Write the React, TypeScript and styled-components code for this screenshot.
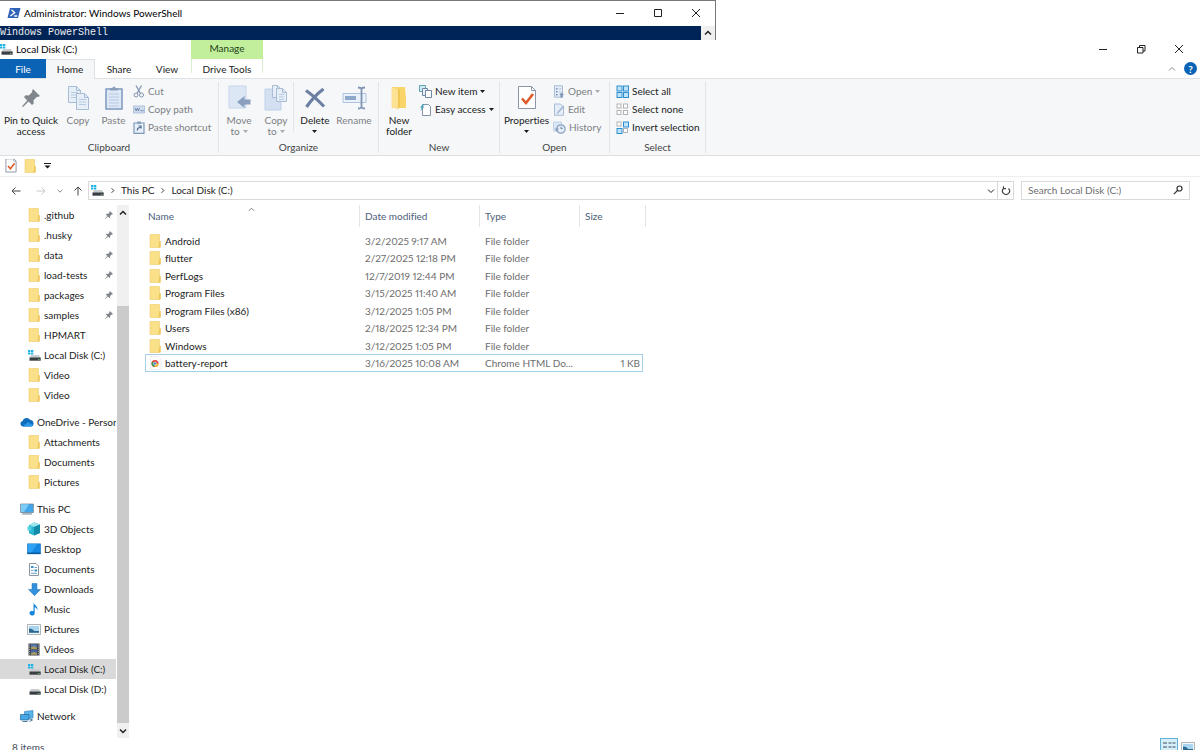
import React from "react";
import styled, { createGlobalStyle, css } from "styled-components";

const GlobalStyle = createGlobalStyle`
  *, *::before, *::after { box-sizing: border-box; }
  html, body { margin: 0; background: #fff; }
  body, button, input {
    font-family: Lato, "Noto Sans", sans-serif;
    font-size: 10px;
    line-height: 12px;
    font-variant-ligatures: none;
    font-variant-numeric: proportional-nums;
    color: #1b1b1b;
  }
  button { border: 0; padding: 0; margin: 0; background: none; cursor: default; }
  svg { display: block; flex: none; }
`;

/* ---------- layout ---------- */

const Screen = styled.div`
  display: flex;
  flex-direction: column;
  height: 100vh;
  overflow: hidden;
  white-space: nowrap;
`;

const ShellWindow = styled.section`
  flex: none;
  width: 716px;
  max-width: 100%;
  border-top: 1px solid #777;
  border-right: 1px solid #777;
`;

const ShellTitle = styled.header`
  display: flex;
  align-items: center;
  height: 25px;
  padding: 0 0 1px 7px;
  gap: 3px;
  color: #000;
`;

const Console = styled.div`
  display: flex;
  height: 14px;
  background: #012456;
`;

const ConsoleText = styled.pre`
  flex: 1;
  margin: 0;
  font-family: "Liberation Mono", monospace;
  font-size: 10px;
  line-height: 14px;
  color: #eee;
`;

const ConsoleScroll = styled.button`
  display: grid;
  place-items: center;
  width: 14px;
  background: #f0f0f0;
`;

const CaptionButtons = styled.div`
  display: flex;
  margin-left: auto;
`;

const CaptionButton = styled.button`
  display: grid;
  place-items: center;
  width: 38px;
  height: 18px;
`;

const Explorer = styled.section`
  display: flex;
  flex-direction: column;
  flex: 1 0 auto;
`;

const TitleBar = styled.header`
  display: flex;
  align-items: center;
  height: 19px;
  padding: 0 2px 1px 0;
`;

const TitleName = styled.div`
  display: flex;
  align-items: center;
  gap: 3px;
  width: 191px;
  color: #000;
`;

const ContextLabel = styled.div`
  width: 72px;
  height: 19px;
  align-self: flex-start;
  background: #c1ef9c;
  text-align: center;
  line-height: 17px;
  color: #23411a;
`;

const TabRow = styled.nav`
  display: flex;
  height: 20px;
  border-bottom: 1px solid #dfe2e5;
`;

const Tab = styled.button<{ $kind?: "file" | "active" | "context"; $w: number }>`
  width: ${(p) => p.$w}px;
  height: 20px;
  ${(p) => p.$kind === "file" && css`background: #0a63b5; color: #fff; height: 19px;`}
  ${(p) => p.$kind === "active" && css`
    background: #f5f6f7;
    border: solid #dfe2e5;
    border-width: 1px 1px 0 0;
    padding-bottom: 1px;
  `}
  ${(p) => p.$kind === "context" && css`
    border: solid #dcefd0;
    border-width: 0 1px;
    height: 14px;
    line-height: 20px;
  `}
`;

const TabTools = styled.div`
  display: flex;
  align-items: center;
  gap: 7px;
  margin-left: auto;
  padding-right: 3px;
`;

const HelpButton = styled.button`
  width: 13px;
  height: 13px;
  border-radius: 50%;
  background: #0a63b5;
  color: #fff;
  font-weight: 700;
`;

const Ribbon = styled.div`
  display: flex;
  height: 77px;
  padding-top: 3px;
  background: #f5f7f9;
  border-bottom: 1px solid #dcdee0;
`;

const Group = styled.section<{ $w: number }>`
  display: flex;
  flex-direction: column;
  justify-content: space-between;
  flex: none;
  width: ${(p) => p.$w}px;
  height: 71px;
  border-right: 1px solid #e2e4e6;
`;

const GroupItems = styled.div`
  display: flex;
  height: 56px;
`;

const GroupLabel = styled.h2`
  margin: 0;
  font-size: 10px;
  font-weight: 400;
  text-align: center;
  color: #444;
`;

const BigButton = styled.button<{ $w: number }>`
  display: flex;
  flex-direction: column;
  align-items: center;
  width: ${(p) => p.$w}px;
  line-height: 11px;
  gap: 2px;
  color: ${(p) => (p.disabled ? "#7d7f83" : "#1b1b1b")};
`;

const BigIcon = styled.span`
  display: grid;
  place-items: center;
  flex: none;
  height: 31px;
`;

const SmallColumn = styled.div`
  display: flex;
  flex-direction: column;
`;

const SmallButton = styled.button`
  display: flex;
  align-items: center;
  gap: 3px;
  height: 18px;
  color: ${(p) => (p.disabled ? "#7d7f83" : "#1b1b1b")};
`;

const Divider = styled.span`
  width: 1px;
  height: 50px;
  background: #e2e4e6;
`;

const QuickAccess = styled.div`
  display: flex;
  align-items: center;
  gap: 7px;
  height: 21px;
  padding-left: 5px;
  border-bottom: 1px solid #efefef;
`;

const AddressRow = styled.div`
  display: flex;
  align-items: center;
  height: 27px;
  padding-right: 10px;
`;

const NavButton = styled.button<{ $w: number }>`
  display: grid;
  place-items: center;
  width: ${(p) => p.$w}px;
  height: 18px;
`;

const AddressBox = styled.div`
  display: flex;
  align-items: center;
  flex: 1;
  height: 19px;
  margin-left: 2px;
  padding-left: 2px;
  border: 1px solid #d9d9d9;
`;

const Crumb = styled.button`
  height: 17px;
  padding-bottom: 1px;
`;

const AddressEnd = styled.div`
  display: flex;
  margin-left: auto;
`;

const AddressButton = styled.button<{ $w: number; $split?: boolean }>`
  display: grid;
  place-items: center;
  width: ${(p) => p.$w}px;
  height: 17px;
  border-left: ${(p) => (p.$split ? "1px solid #d9d9d9" : "0")};
`;

const SearchBox = styled.label`
  display: flex;
  align-items: center;
  width: 169px;
  height: 19px;
  margin-left: 7px;
  padding: 0 6px 1px;
  border: 1px solid #d9d9d9;
`;

const SearchInput = styled.input`
  flex: 1;
  min-width: 0;
  padding: 0;
  border: 0;
  outline: 0;
  &::placeholder { color: #6d6d6d; opacity: 1; }
`;

const Body = styled.div`
  display: flex;
  flex: 1 0 auto;
  padding-top: 1px;
`;

const Tree = styled.nav`
  display: flex;
  flex-direction: column;
  gap: 7px;
  width: 116px;
  padding-bottom: 12px;
`;

const TreeList = styled.ul`
  margin: 0;
  padding: 0;
  list-style: none;
`;

const TreeLink = styled.a<{ $root?: boolean; $selected?: boolean }>`
  display: flex;
  align-items: center;
  gap: 3px;
  height: 20px;
  padding-left: ${(p) => (p.$root ? 20 : 27)}px;
  background: ${(p) => (p.$selected ? "#d9d9d9" : "transparent")};
  color: #1b1b1b;
  text-decoration: none;
  overflow: hidden;
`;

const IconSlot = styled.span`
  display: grid;
  place-items: center;
  flex: none;
  width: 14px;
`;

const PinSlot = styled.span`
  margin-left: auto;
  padding-right: 3px;
`;

const Scrollbar = styled.div`
  display: flex;
  flex-direction: column;
  width: 12px;
  margin-left: 1px;
  background: #f0f0f0;
`;

const ScrollButton = styled.button`
  display: grid;
  place-items: center;
  height: 15px;
`;

const ScrollTrack = styled.div`
  display: flex;
  flex-direction: column;
  justify-content: flex-end;
  flex: 1;
`;

const ScrollThumb = styled.div`
  height: 83%;
  background: #cbcbcb;
`;

const Files = styled.main`
  flex: 1;
  padding-left: 16px;
`;

const FileTable = styled.table`
  width: 501px;
  table-layout: fixed;
  border-collapse: separate;
  border-spacing: 0;
`;

const HeadCell = styled.th`
  position: relative;
  height: 27px;
  padding: 0;
  vertical-align: top;
  font-weight: 400;
  text-align: left;
`;

const HeadLabel = styled.button<{ $first?: boolean }>`
  display: block;
  width: 100%;
  height: 22px;
  padding-left: ${(p) => (p.$first ? 3 : 5)}px;
  border-right: 1px solid #e3e3e3;
  text-align: left;
  color: #4c607a;
`;

const SortMark = styled.span`
  position: absolute;
  top: 0;
  left: 102px;
`;

const FileRow = styled.tr<{ $focused?: boolean }>`
  height: 17px;
  &:nth-child(even) { height: 18px; }
  td {
    padding: 0 0 0 5px;
    color: #6d6d6d;
    ${(p) => p.$focused && css`
      border: solid #a6d0e8;
      border-width: 1px 0;
    `}
  }
  td:first-child { color: #1b1b1b; padding-left: 4px; }
  td:nth-child(4) { text-align: right; padding-right: 3px; }
  ${(p) => p.$focused && css`
    td:first-child { border-left-width: 1px; padding-left: 3px; }
    td:nth-child(4) { border-right-width: 1px; padding-right: 2px; }
    td:last-child { border: 0; }
  `}
`;

const FileName = styled.span`
  display: flex;
  align-items: center;
  gap: 3px;
  svg { width: 13px; }
`;

const StatusBar = styled.footer`
  display: flex;
  justify-content: space-between;
  height: 19px;
  padding: 0 6px 0 12px;
  line-height: 18px;
  color: #3f4a57;
`;

const ViewButtons = styled.div`
  display: flex;
  gap: 3px;
`;

const ViewButton = styled.button<{ $on?: boolean }>`
  display: grid;
  place-items: center;
  width: ${(p) => (p.$on ? 18 : 13)}px;
  height: 18px;
  border: ${(p) => (p.$on ? "1px solid #5fb2d6" : "0")};
  background: ${(p) => (p.$on ? "#d5eef8" : "none")};
`;

const Spacer = styled.span`
  width: 6px;
`;

/* ---------- icons ---------- */

const FolderIcon = () => (
  <svg width="13" height="14" viewBox="0 0 13 14">
    <path d="M1 .5h9.500v13H1z" fill="#fbe08a" stroke="#eecb66" strokeWidth=".6" />
    <path d="M10.200 7.600l1.600-.6v6.500H9.400z" fill="#eec75c" />
  </svg>
);

const BigFolderIcon = () => (
  <svg width="18" height="24" viewBox="0 0 18 24">
    <path d="M2 1h13l1 12v9H2z" fill="#f9d469" />
    <path d="M1.500 1l6.500 2.500v20L1.500 21z" fill="#fde293" />
    <path d="M8 3.500V23l1.800-1.500V3z" fill="#f3c653" />
  </svg>
);

const DriveIcon = ({ windows = true }: { windows?: boolean }) => (
  <svg width="13" height="13" viewBox="0 0 13 13">
    {windows && <path d="M0 1h2.300v2H0zM2.900 1h2.400v2H2.900zM0 3.600h2.300v2H0zM2.900 3.600h2.400v2H2.900z" fill="#1fb3e6" />}
    <path d="M3 6h8l1.500 3H1.500z" fill="#c9cccf" />
    <path d="M1.500 8.500h11.200v3.200H1.500z" fill="#3a3f44" />
    <path d="M10 10h1.500v.8H10z" fill="#7cd67c" />
  </svg>
);

const PowerShellIcon = () => (
  <svg width="14" height="12" viewBox="0 0 14 12">
    <path d="M3 1h10.500L11 11H.5z" fill="#2e63b8" />
    <path d="M4.500 2.800l3.200 3-4.400 3.200M7.200 9h3" stroke="#fff" strokeWidth="1.300" fill="none" />
  </svg>
);

type GlyphProps = { d: string; size?: number; color?: string; width?: number };
const Glyph = ({ d, size = 10, color = "#222", width = 1 }: GlyphProps) => (
  <svg width={size} height={size} viewBox="0 0 10 10" fill="none" stroke={color} strokeWidth={width}>
    <path d={d} />
  </svg>
);

const MINIMIZE = "M1 5.500h8";
const MAXIMIZE = "M1.500 1.500h7v7h-7z";
const RESTORE = "M1.500 3.500h5.500v5.500H1.500zM3.500 3.500V1.500H9v5.500H7";
const CLOSE = "M1 1l8 8M9 1L1 9";
const UP = "M2 6.500L5 3.500l3 3";
const DOWN = "M2 3.500l3 3 3-3";
const RIGHT = "M4 2.500L6.500 5 4 7.500";

const Caret = ({ faded = false }: { faded?: boolean }) => (
  <svg width="5" height="3" viewBox="0 0 5 3">
    <path d="M0 0h5L2.500 3z" fill={faded ? "#a9abaf" : "#1b1b1b"} />
  </svg>
);

const PinIcon = ({ size = 8 }: { size?: number }) => (
  <svg width={size} height={size} viewBox="0 0 18 18">
    <path d="M11 0l7 7-2 1-1-.3-3.500 3.500.2 3.300-1.700 1.500-3.400-3.400L1 18l-1-.8 5.200-5.800L2 8l1.500-1.700 3.300.2L10.300 3 10 2z" fill="#80868c" />
  </svg>
);

const Page = ({ x, y, w, h, lines = true }: { x: number; y: number; w: number; h: number; lines?: boolean }) => (
  <g fill="#e6eef8" stroke="#a9bcd6" strokeWidth="1">
    <path d={`M${x} ${y}h${w - 4}l4 4v${h - 4}h-${w}z`} />
    <path d={`M${x + w - 4} ${y}v4h4`} fill="none" />
    {lines && <path d={`M${x + 2.5} ${y + 6}h${w - 5}M${x + 2.5} ${y + 8.500}h${w - 5}M${x + 2.5} ${y + 11}h${w - 5}`} stroke="#b9cbe2" />}
  </g>
);

const CopyIcon = () => (
  <svg width="22" height="24" viewBox="0 0 22 24">
    <Page x={1.5} y={0.5} w={12} h={16} />
    <Page x={9.5} y={7.5} w={12} h={16} />
  </svg>
);

const PasteIcon = () => (
  <svg width="18" height="25" viewBox="0 0 18 25">
    <path d="M1 4h16v20H1z" fill="#dfe9f6" stroke="#7f98bd" strokeWidth="1.500" />
    <path d="M5 5.500V3h2.500a1.500 1.500 0 013 0H13v2.500z" fill="#8b9fbd" />
    <path d="M4 9h10M4 12h10M4 15h10M4 18h10M4 21h10" stroke="#b4c8e3" />
  </svg>
);

const CutIcon = () => (
  <svg width="12" height="13" viewBox="0 0 12 13" fill="none" stroke="#8496b0">
    <path d="M3 .5l4.500 8M8.500 .5L4 8.500" strokeWidth="1.300" />
    <circle cx="3" cy="10" r="2" />
    <circle cx="8.500" cy="10" r="2" />
  </svg>
);

const CopyPathIcon = () => (
  <svg width="12" height="9" viewBox="0 0 12 9">
    <path d="M.5 1h11v7H.5z" fill="#cfddef" stroke="#a5b9d3" strokeWidth=".8" />
    <path d="M2 3l1.200 3 1.200-3 1 3L6.500 3M7.500 5.700h3" stroke="#6a84aa" strokeWidth=".9" fill="none" />
  </svg>
);

const PasteShortcutIcon = () => (
  <svg width="12" height="13" viewBox="0 0 12 13">
    <path d="M1 2h10v10.300H1z" fill="#e8f0fa" stroke="#7f98bd" strokeWidth="1.200" />
    <path d="M4 .5h4v2.500H4z" fill="#8b9fbd" />
    <path d="M4.300 9.500c0-2 1-3 3-3M5.600 5h2.400v2.600" stroke="#47668f" strokeWidth="1.200" fill="none" />
  </svg>
);

const MoveToIcon = () => (
  <svg width="24" height="25" viewBox="0 0 24 25">
    <path d="M2 1h17v22H2z" fill="#dce7f5" stroke="#c5d5ea" />
    <path d="M23.500 14.500h-6V11L10 17l7.500 6v-3.500h6z" fill="#8ba0be" />
  </svg>
);

const CopyToIcon = () => (
  <svg width="24" height="26" viewBox="0 0 24 26">
    <path d="M1 4h16v21H1z" fill="#d3e0f1" stroke="#c0d1e8" />
    <Page x={8.5} y={0.5} w={9} h={12} lines={false} />
    <Page x={12.5} y={3.5} w={10} h={13} />
  </svg>
);

const DeleteIcon = () => (
  <svg width="22" height="22" viewBox="0 0 22 22">
    <path d="M2 3.500Q10 9 20 19.500M19.500 2Q10 9 2.500 20" stroke="#6d80a3" strokeWidth="3.200" fill="none" />
  </svg>
);

const RenameIcon = () => (
  <svg width="25" height="24" viewBox="0 0 25 24">
    <path d="M1 7.500h23v9H1z" fill="#eaf1fa" stroke="#b0c4df" />
    <path d="M3 10h11v4H3z" fill="#8fa9cd" />
    <path d="M16 1.500q3 0 3.500 1.500Q20 1.500 23 1.500M19.500 3v18M16 22.500q3 0 3.500-1.500 .5 1.500 3.500 1.500" stroke="#7f93b2" strokeWidth="1.800" fill="none" />
  </svg>
);

const NewItemIcon = () => (
  <svg width="13" height="13" viewBox="0 0 13 13" strokeWidth="1">
    <path d="M.5 .5h6v6h-6z" fill="#cfeaf0" stroke="#5da4b4" />
    <path d="M3.500 3.500h5v7h-5z" fill="#e9f1fa" stroke="#7088a8" />
    <path d="M6.500 5.500h6v7h-6z" fill="#fff" stroke="#7088a8" />
  </svg>
);

const EasyAccessIcon = () => (
  <svg width="13" height="13" viewBox="0 0 13 13">
    <path d="M3.500 1.500h6l2 2v9h-8z" fill="#fff" stroke="#8495ab" />
    <path d="M4 1L1 4.500h1.700L1.500 8l4-4.500H3.800L5.500 1z" fill="#4a9fb8" />
  </svg>
);

const PropertiesIcon = ({ small = false }: { small?: boolean }) => (
  <svg width={small ? 12 : 20} height={small ? 14 : 25} viewBox={small ? "0 2 20 23" : "0 0 20 25"}>
    <path d="M1.500 1.500h13l4 4v18h-17z" fill="#fff" stroke="#8b97a8" strokeWidth={small ? 1.600 : 1} />
    <path d="M14.500 1.500v4h4" fill="none" stroke="#8b97a8" />
    <path d="M5 13.500l4 4.500 7-9" fill="none" stroke="#e0592a" strokeWidth="2.600" />
  </svg>
);

const OpenIcon = () => (
  <svg width="12" height="13" viewBox="0 0 12 13">
    <path d="M1.500 .8h8v11.400h-8z" fill="#e4edf8" stroke="#a9bcd6" />
    <path d="M3 3h1.500v1.500H3zM3 6h1.500v1.500H3zM3 9h1.500v1.500H3z" fill="#7890b4" />
    <path d="M6 3.800h2.500M6 6.800h2" stroke="#b2c5df" />
    <path d="M8.500 7.500l2.800 2.500H9.700v2.500H7.300V10H6z" fill="#8398b8" />
  </svg>
);

const EditIcon = () => (
  <svg width="12" height="13" viewBox="0 0 12 13">
    <path d="M1.500 1h6l3 3v8.300h-9z" fill="#e4edf8" stroke="#a9bcd6" />
    <path d="M11.500 3.500L5.500 10l-2 1.500.8-2.500L10 2.500z" fill="#a6b9d4" />
  </svg>
);

const HistoryIcon = () => (
  <svg width="13" height="13" viewBox="0 0 13 13">
    <path d="M.5 1h8v9h-8z" fill="#dbe6f4" stroke="#c0d1e8" />
    <circle cx="8" cy="8" r="4.200" fill="#e6eef8" stroke="#8ba0c0" strokeWidth="1.200" />
    <path d="M8 5.500V8l2-1" stroke="#7b90b2" fill="none" />
    <path d="M1.500 7.500L4 11 6 7.500z" fill="#8ba0c0" />
  </svg>
);

const SelectIcon = ({ on }: { on: [boolean, boolean, boolean, boolean] }) => (
  <svg width="13" height="13" viewBox="0 0 13 13">
    {on.map((filled, i) => (
      <rect
        key={i}
        x={i % 2 ? 7.5 : 1}
        y={i > 1 ? 7.5 : 1}
        width={filled ? 5 : 4}
        height={filled ? 5 : 4}
        fill={filled ? "#bfe4fa" : "#fff"}
        stroke={filled ? "#2e8fd0" : "#b3b3b3"}
      />
    ))}
  </svg>
);

const OneDriveIcon = () => (
  <svg width="14" height="10" viewBox="0 0 14 10">
    <path d="M3 9.500A2.800 2.800 0 012.500 4 4.300 4.300 0 0110.300 3 3.300 3.300 0 0111 9.500z" fill="#0f6cbd" />
    <path d="M2.800 9.500L8 5l5.500 3.300A2.500 2.500 0 0111 9.500z" fill="#2a97e8" />
  </svg>
);

const PcIcon = () => (
  <svg width="14" height="13" viewBox="0 0 14 13">
    <path d="M.6 1h12.800v8.500H.6z" fill="#41a7ea" stroke="#6b7d8c" strokeWidth=".7" />
    <path d="M1 1.300h8L4 9H1z" fill="#7fcbf7" />
    <path d="M2.500 10h9l1 1.700h-11z" fill="#a8b5bf" />
  </svg>
);

const ObjectsIcon = () => (
  <svg width="14" height="14" viewBox="0 0 14 14">
    <path d="M7.500 .5l5.500 2v8.500l-6 2.500-5-2.300V3z" fill="#27b4cf" />
    <path d="M2 3l5.500-2.500L13 2.500 7 5z" fill="#9be6ee" />
    <path d="M7 5l6-2.500v8.500L7 13.500z" fill="#128ba8" />
    <path d="M.5 4.500h4v4h-4z" fill="#55cfe2" />
  </svg>
);

const DesktopIcon = () => (
  <svg width="14" height="12" viewBox="0 0 14 12">
    <path d="M.5 .8h13v10H.5z" fill="#1488e2" stroke="#0c6fbf" strokeWidth=".6" />
    <path d="M1 1h9L4 10.500H1z" fill="#2ea2f2" />
    <path d="M.5 9.500h13v1.500H.5z" fill="#0b5c9e" />
  </svg>
);

const DocumentIcon = () => (
  <svg width="12" height="13" viewBox="0 0 12 13">
    <path d="M1.500 .5h6.500l2.500 2.500v9.500h-9z" fill="#fff" stroke="#7d8b97" strokeWidth=".9" />
    <path d="M3 3h2.500v2H3zM6.500 6.500H9v2H6.500z" fill="#3a91c9" />
    <path d="M6.500 4.500H9M3 7.300h2.500M3 10.300h6" stroke="#64a3c8" />
  </svg>
);

const DownloadIcon = () => (
  <svg width="13" height="13" viewBox="0 0 13 13">
    <path d="M4 .5h5v6h3.500l-6 6.200-6-6.200H4z" fill="#3290dd" stroke="#1d74bd" strokeWidth=".5" />
  </svg>
);

const MusicIcon = () => (
  <svg width="12" height="14" viewBox="0 0 12 14">
    <path d="M5.500 .5c.5 2.500 5 3.500 3.800 8-.3-2-1.400-3-2.600-3.300v6a2.600 2.300 0 11-1.200-2z" fill="#1586dc" />
  </svg>
);

const PictureIcon = () => (
  <svg width="14" height="11" viewBox="0 0 14 11">
    <path d="M.5 .5h13v10H.5z" fill="#f4f6f7" stroke="#9aa4ab" strokeWidth=".8" />
    <path d="M2 2h10v6.800H2z" fill="#a8d5f0" />
    <path d="M2 4.500q4 0 5 2.500h5v1.800H2z" fill="#2d6a92" />
  </svg>
);

const VideoIcon = () => (
  <svg width="12" height="13" viewBox="0 0 12 13">
    <path d="M.5 .5h11v12H.5z" fill="#3c4048" />
    <path d="M3 1.300h6v4.900H3z" fill="#5079b5" />
    <path d="M3 7h6v4.800H3z" fill="#4567a8" />
    <path d="M3 4.500l3-1.500 3 2v1.200H3zM3 10l3-1 3 1v1.800H3z" fill="#a89d5a" />
    <path d="M1.700 1.500v10.500M10.300 1.500v10.500" stroke="#c9cdd2" strokeDasharray="1 1.200" />
  </svg>
);

const NetworkIcon = () => (
  <svg width="14" height="13" viewBox="0 0 14 13">
    <path d="M4.500 1.500L13 .5v7.500l-8.500 1z" fill="#59b5ea" stroke="#2f7fb5" strokeWidth=".6" />
    <path d="M.5 4.500h8.500v5.500H.5z" fill="#48a8e6" stroke="#25699b" strokeWidth=".7" />
    <path d="M2.500 11.500h5M10 9l2.500 1-3 1.500" stroke="#4e7d9e" fill="none" />
  </svg>
);

const ChromeIcon = () => (
  <svg width="13" height="14" viewBox="0 0 13 14">
    <path d="M1.500 .5h8l2.500 2.500v10.500H1.500z" fill="#fcfcfc" stroke="#e6e6e6" strokeWidth=".6" />
    <circle cx="6" cy="7.500" r="3.500" fill="#e04335" />
    <path d="M6 7.500L3 5.800a3.500 3.500 0 002.600 5.200z" fill="#2f9e50" />
    <path d="M6 7.500H9.500a3.500 3.500 0 01-3.900 3.500z" fill="#f6bf26" />
    <circle cx="6" cy="7.500" r="1.500" fill="#3a74d8" stroke="#fff" strokeWidth=".6" />
  </svg>
);

const DetailsIcon = () => (
  <svg width="14" height="12" viewBox="0 0 14 12">
    {[2, 6, 10].map((y) => (
      <path key={y} d={`M1 ${y}h4M6.500 ${y}h3M10.500 ${y}h3`} stroke="#6f8492" strokeWidth="1.500" />
    ))}
  </svg>
);

/* ---------- data ---------- */

type TreeItem = { label: string; icon: React.ReactNode; pinned?: boolean; root?: boolean; selected?: boolean };

const folder = (label: string, pinned = false): TreeItem => ({ label, pinned, icon: <FolderIcon /> });

const tree: TreeItem[][] = [
  [
    folder(".github", true),
    folder(".husky", true),
    folder("data", true),
    folder("load-tests", true),
    folder("packages", true),
    folder("samples", true),
    folder("HPMART"),
    { label: "Local Disk (C:)", icon: <DriveIcon /> },
    folder("Video"),
    folder("Video"),
  ],
  [
    { label: "OneDrive - Personal", icon: <OneDriveIcon />, root: true },
    folder("Attachments"),
    folder("Documents"),
    folder("Pictures"),
  ],
  [
    { label: "This PC", icon: <PcIcon />, root: true },
    { label: "3D Objects", icon: <ObjectsIcon /> },
    { label: "Desktop", icon: <DesktopIcon /> },
    { label: "Documents", icon: <DocumentIcon /> },
    { label: "Downloads", icon: <DownloadIcon /> },
    { label: "Music", icon: <MusicIcon /> },
    { label: "Pictures", icon: <PictureIcon /> },
    { label: "Videos", icon: <VideoIcon /> },
    { label: "Local Disk (C:)", icon: <DriveIcon />, selected: true },
    { label: "Local Disk (D:)", icon: <DriveIcon windows={false} /> },
  ],
  [{ label: "Network", icon: <NetworkIcon />, root: true }],
];

const files = [
  { name: "Android", date: "3/2/2025 9:17 AM", type: "File folder" },
  { name: "flutter", date: "2/27/2025 12:18 PM", type: "File folder" },
  { name: "PerfLogs", date: "12/7/2019 12:44 PM", type: "File folder" },
  { name: "Program Files", date: "3/15/2025 11:40 AM", type: "File folder" },
  { name: "Program Files (x86)", date: "3/12/2025 1:05 PM", type: "File folder" },
  { name: "Users", date: "2/18/2025 12:34 PM", type: "File folder" },
  { name: "Windows", date: "3/12/2025 1:05 PM", type: "File folder" },
  { name: "battery-report", date: "3/16/2025 10:08 AM", type: "Chrome HTML Do...", size: "1 KB" },
];

/* ---------- parts ---------- */

type RibbonButtonProps = { icon: React.ReactNode; lines: string[]; w: number; caret?: boolean; disabled?: boolean };

const CaretLine = styled.span`
  display: flex;
  align-items: center;
  justify-content: center;
  gap: 3px;
  min-height: 11px;
`;

const RibbonButton = ({ icon, lines, w, caret, disabled }: RibbonButtonProps) => (
  <BigButton $w={w} disabled={disabled}>
    <BigIcon>{icon}</BigIcon>
    <span>
      <div>{lines[0]}</div>
      <CaretLine>
        {lines[1]}
        {caret && <Caret faded={disabled} />}
      </CaretLine>
    </span>
  </BigButton>
);

const RibbonSmall = ({ icon, label, caret, disabled }: { icon: React.ReactNode; label: string; caret?: boolean; disabled?: boolean }) => (
  <SmallButton disabled={disabled}>
    {icon}
    {label}
    {caret && <Caret faded={disabled} />}
  </SmallButton>
);

const Captions = ({ middle }: { middle: string }) => (
  <CaptionButtons>
    <CaptionButton aria-label="Minimize"><Glyph d={MINIMIZE} /></CaptionButton>
    <CaptionButton aria-label="Resize"><Glyph d={middle} /></CaptionButton>
    <CaptionButton aria-label="Close"><Glyph d={CLOSE} /></CaptionButton>
  </CaptionButtons>
);

export default function App() {
  return (
    <Screen>
      <GlobalStyle />
      <ShellWindow>
        <ShellTitle>
          <PowerShellIcon />
          Administrator: Windows PowerShell
          <Captions middle={MAXIMIZE} />
        </ShellTitle>
        <Console>
          <ConsoleText>Windows PowerShell</ConsoleText>
          <ConsoleScroll aria-label="Scroll up"><Glyph d={UP} width={1.500} /></ConsoleScroll>
        </Console>
      </ShellWindow>

      <Explorer>
        <TitleBar>
          <TitleName><DriveIcon />Local Disk (C:)</TitleName>
          <ContextLabel>Manage</ContextLabel>
          <Captions middle={RESTORE} />
        </TitleBar>
        <TabRow>
          <Tab $kind="file" $w={46}>File</Tab>
          <Tab $kind="active" $w={49}>Home</Tab>
          <Tab $w={48}>Share</Tab>
          <Tab $w={48}>View</Tab>
          <Tab $kind="context" $w={72}>Drive Tools</Tab>
          <TabTools>
            <Glyph d={UP} color="#8a8a8a" />
            <HelpButton>?</HelpButton>
          </TabTools>
        </TabRow>

        <Ribbon>
          <Group $w={219}>
            <GroupItems>
              <RibbonButton w={62} icon={<PinIcon size={18} />} lines={["Pin to Quick", "access"]} />
              <RibbonButton w={32} icon={<CopyIcon />} lines={["Copy"]} disabled />
              <RibbonButton w={39} icon={<PasteIcon />} lines={["Paste"]} disabled />
              <SmallColumn>
                <RibbonSmall icon={<CutIcon />} label="Cut" disabled />
                <RibbonSmall icon={<CopyPathIcon />} label="Copy path" disabled />
                <RibbonSmall icon={<PasteShortcutIcon />} label="Paste shortcut" disabled />
              </SmallColumn>
            </GroupItems>
            <GroupLabel>Clipboard</GroupLabel>
          </Group>
          <Group $w={160}>
            <GroupItems>
              <RibbonButton w={40} icon={<MoveToIcon />} lines={["Move", "to"]} caret disabled />
              <RibbonButton w={34} icon={<CopyToIcon />} lines={["Copy", "to"]} caret disabled />
              <Divider />
              <RibbonButton w={42} icon={<DeleteIcon />} lines={["Delete"]} caret />
              <RibbonButton w={36} icon={<RenameIcon />} lines={["Rename"]} disabled />
            </GroupItems>
            <GroupLabel>Organize</GroupLabel>
          </Group>
          <Group $w={121}>
            <GroupItems>
              <RibbonButton w={40} icon={<BigFolderIcon />} lines={["New", "folder"]} />
              <SmallColumn>
                <RibbonSmall icon={<NewItemIcon />} label="New item" caret />
                <RibbonSmall icon={<EasyAccessIcon />} label="Easy access" caret />
              </SmallColumn>
            </GroupItems>
            <GroupLabel>New</GroupLabel>
          </Group>
          <Group $w={110}>
            <GroupItems>
              <RibbonButton w={53} icon={<PropertiesIcon />} lines={["Properties"]} caret />
              <SmallColumn>
                <RibbonSmall icon={<OpenIcon />} label="Open" caret disabled />
                <RibbonSmall icon={<EditIcon />} label="Edit" disabled />
                <RibbonSmall icon={<HistoryIcon />} label="History" disabled />
              </SmallColumn>
            </GroupItems>
            <GroupLabel>Open</GroupLabel>
          </Group>
          <Group $w={96}>
            <GroupItems>
              <Spacer />
              <SmallColumn>
                <RibbonSmall icon={<SelectIcon on={[true, true, true, true]} />} label="Select all" />
                <RibbonSmall icon={<SelectIcon on={[false, false, false, false]} />} label="Select none" />
                <RibbonSmall icon={<SelectIcon on={[false, true, true, false]} />} label="Invert selection" />
              </SmallColumn>
            </GroupItems>
            <GroupLabel>Select</GroupLabel>
          </Group>
        </Ribbon>

        <QuickAccess>
          <PropertiesIcon small />
          <FolderIcon />
          <svg width="7" height="6" viewBox="0 0 7 6">
            <path d="M0 0h7v1H0zM.5 2.500h6L3.500 5.500z" fill="#1b1b1b" />
          </svg>
        </QuickAccess>

        <AddressRow>
          <NavButton $w={32} aria-label="Back"><Glyph d="M9.500 5H1M4.500 1.500L1 5l3.500 3.500" color="#444" /></NavButton>
          <NavButton $w={18} aria-label="Forward"><Glyph d="M.5 5H9M5.500 1.500L9 5 5.500 8.500" color="#c8c8c8" /></NavButton>
          <NavButton $w={19} aria-label="Recent"><Glyph d={DOWN} size={8} color="#666" /></NavButton>
          <NavButton $w={17} aria-label="Up"><Glyph d="M5 9.500V1M1.500 4.500L5 1l3.500 3.500" color="#444" /></NavButton>
          <AddressBox>
            <DriveIcon />
            <AddressButton $w={17} aria-label="Expand"><Glyph d={RIGHT} size={9} /></AddressButton>
            <Crumb>This PC</Crumb>
            <AddressButton $w={17} aria-label="Expand"><Glyph d={RIGHT} size={9} /></AddressButton>
            <Crumb>Local Disk (C:)</Crumb>
            <AddressEnd>
              <AddressButton $w={12} aria-label="Previous locations"><Glyph d={DOWN} /></AddressButton>
              <AddressButton $w={16} $split aria-label="Refresh"><Glyph d="M7.500 2.500A3.500 3.500 0 112.500 2.500M2.500 .3v2.400h2.500" color="#444" width={1.2} /></AddressButton>
            </AddressEnd>
          </AddressBox>
          <SearchBox>
            <SearchInput placeholder="Search Local Disk (C:)" aria-label="Search Local Disk (C:)" />
            <Glyph d="M9 3.500A2.500 2.500 0 114 3.500 2.500 2.500 0 019 3.500M4.500 5.500L.8 9.200" color="#333" width={1.2} />
          </SearchBox>
        </AddressRow>

        <Body>
          <Tree>
            {tree.map((group, i) => (
              <TreeList key={i}>
                {group.map((item, j) => (
                  <li key={j}>
                    <TreeLink href="#" $root={item.root} $selected={item.selected}>
                      <IconSlot>{item.icon}</IconSlot>
                      {item.label}
                      {item.pinned && <PinSlot><PinIcon /></PinSlot>}
                    </TreeLink>
                  </li>
                ))}
              </TreeList>
            ))}
          </Tree>
          <Scrollbar>
            <ScrollButton aria-label="Scroll up"><Glyph d={UP} width={1.500} /></ScrollButton>
            <ScrollTrack><ScrollThumb /></ScrollTrack>
            <ScrollButton aria-label="Scroll down"><Glyph d={DOWN} width={1.500} /></ScrollButton>
          </Scrollbar>
          <Files>
            <FileTable>
              <colgroup>
                <col width="215" />
                <col width="120" />
                <col width="100" />
                <col width="63" />
                <col width="3" />
              </colgroup>
              <thead>
                <tr>
                  <HeadCell>
                    <HeadLabel $first>Name</HeadLabel>
                    <SortMark><Glyph d={UP} size={9} color="#777" /></SortMark>
                  </HeadCell>
                  <HeadCell><HeadLabel>Date modified</HeadLabel></HeadCell>
                  <HeadCell><HeadLabel>Type</HeadLabel></HeadCell>
                  <HeadCell colSpan={2}><HeadLabel>Size</HeadLabel></HeadCell>
                </tr>
              </thead>
              <tbody>
                {files.map((file) => (
                  <FileRow key={file.name} $focused={Boolean(file.size)}>
                    <td>
                      <FileName>
                        {file.size ? <ChromeIcon /> : <FolderIcon />}
                        {file.name}
                      </FileName>
                    </td>
                    <td>{file.date}</td>
                    <td>{file.type}</td>
                    <td>{file.size}</td>
                    <td />
                  </FileRow>
                ))}
              </tbody>
            </FileTable>
          </Files>
        </Body>

        <StatusBar>
          8 items
          <ViewButtons>
            <ViewButton $on aria-label="Details view"><DetailsIcon /></ViewButton>
            <ViewButton aria-label="Large icons view"><PictureIcon /></ViewButton>
          </ViewButtons>
        </StatusBar>
      </Explorer>
    </Screen>
  );
}
